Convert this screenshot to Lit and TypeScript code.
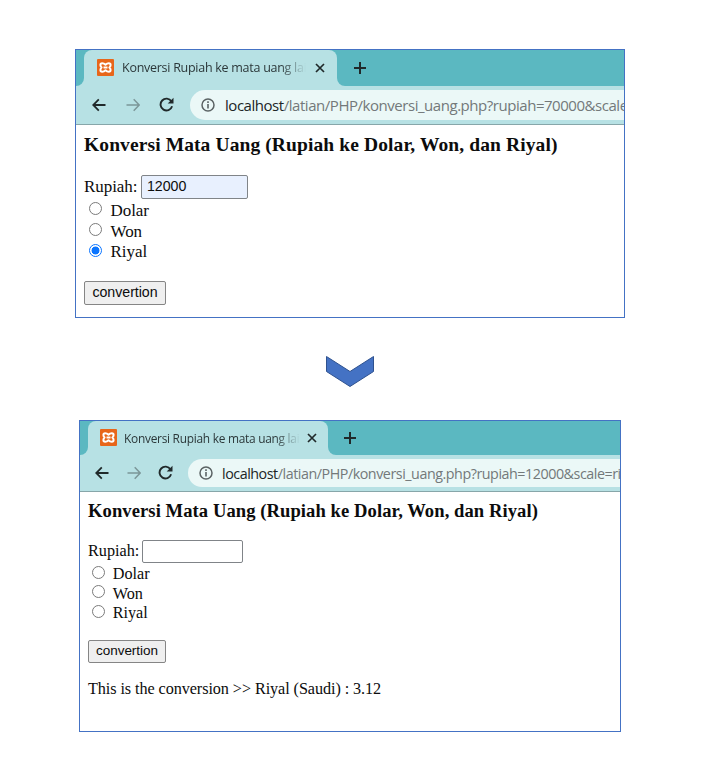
import { LitElement, html, css, nothing } from "lit";
import { customElement, property } from "lit/decorators.js";

@customElement("browser-window")
class BrowserWindow extends LitElement {
  @property() query = "";
  @property() amount = "";
  @property() selected = "";
  @property() result = "";

  static styles = css`
    :host { display: flex; flex-direction: column; box-sizing: border-box; border: 1px solid #4472c4; background: #fff; overflow: hidden; color: #0c0c0c; font-family: "Liberation Serif", serif; }
    .strip { flex: none; display: flex; height: var(--strip-h); background: #5bb8c1; }
    .flare { flex: none; width: 8px; background: #b7e1e4; }
    .flare::before { content: ""; display: block; height: 100%; background: #5bb8c1; border-radius: 0 0 8px 0; }
    .flare.right::before { border-radius: 0 0 0 8px; }
    .tab { flex: none; box-sizing: border-box; width: var(--tab-w); display: flex; align-items: center; background: #b7e1e4; border-radius: 8px 8px 0 0; padding-left: var(--tab-pad); padding-bottom: 1px; }
    .tab svg { flex: none; }
    .title { flex: none; width: var(--title-w); margin-left: var(--title-gap); white-space: nowrap; overflow: hidden; font: var(--title-font); letter-spacing: var(--title-ls); color: #2b3739; -webkit-mask-image: linear-gradient(to right, #000 86%, transparent 100%); mask-image: linear-gradient(to right, #000 86%, transparent 100%); }
    .close { margin-left: var(--close-gap); }
    .plus { flex: none; align-self: center; margin-left: var(--plus-gap); }
    .bar { flex: none; box-sizing: border-box; height: var(--bar-h); display: flex; align-items: center; background: #b7e1e4; border-bottom: 1px solid #87a6a9; padding-left: var(--bar-pad); }
    .bar svg { flex: none; display: block; }
    .nav { margin-bottom: 1px; }
    .fwd { margin-left: var(--nav-gap); }
    .reload { margin-left: calc(var(--nav-gap) - 1px); margin-right: 1px; }
    .pill { flex: 1; min-width: 0; height: var(--pill-h); margin-left: var(--pill-gap); display: flex; align-items: center; background: #ebf8f7; border-radius: 15px 0 0 15px; padding-left: 11px; overflow: hidden; }
    .url { margin-left: var(--url-gap); white-space: nowrap; font: var(--url-font); letter-spacing: var(--url-ls); color: #73797a; }
    .url b { font-weight: 400; color: #202526; }
    .page { flex: 1; padding-left: 8px; font-size: var(--text); letter-spacing: var(--text-ls); white-space: nowrap; }
    h3 { margin: 0; height: var(--h3-h); line-height: var(--h3-lh); font-size: var(--h3); letter-spacing: var(--h3-ls); }
    .field { display: flex; align-items: center; height: var(--field-h); }
    .label { width: var(--label-w); }
    .input { box-sizing: border-box; width: var(--input-w); height: 100%; border: 1px solid #808488; border-radius: 2px; padding-left: 5px; line-height: calc(var(--field-h) - 3px); font-family: "Liberation Sans", sans-serif; font-size: var(--control); letter-spacing: var(--control-ls); }
    .input.filled { background: #e8f0fe; }
    .options { padding-top: 2px; height: var(--opt-h); box-sizing: border-box; }
    .option { display: flex; height: var(--row); line-height: var(--row); padding-left: var(--option-pad); }
    .radio { box-sizing: border-box; width: 13px; height: 13px; margin-top: var(--radio-top); margin-right: var(--radio-gap); border: 1px solid #7b7b7b; border-radius: 50%; }
    .radio.on { border: 1.5px solid #0b75ff; background: radial-gradient(circle, #0b75ff 3.6px, #fff 4.3px); }
    .button { box-sizing: border-box; width: var(--button-w); height: var(--button-h); line-height: calc(var(--button-h) - 3px); border: 1px solid #858585; border-radius: 2px; background: #efefef; text-align: center; font-family: "Liberation Sans", sans-serif; font-size: var(--control); letter-spacing: var(--control-ls); }
    .result { margin-top: 16px; line-height: 20px; letter-spacing: -0.075px; }
  `;

  private option(name: string) {
    return html`<div class="option"><span class="radio ${name === this.selected ? "on" : ""}"></span><span>${name}</span></div>`;
  }

  render() {
    return html`
      <div class="strip">
        <div class="flare"></div>
        <div class="tab">
          <svg width="17" height="17" viewBox="0 0 17 17"><rect width="17" height="17" rx="1" fill="#e8661a"/><path d="M5.200 4.300Q7 4.300 8.500 5.800 10 4.300 11.800 4.300 13.600 4.300 13.600 6 13.600 7.500 12.400 8.500 13.600 9.500 13.600 11 13.600 12.700 11.800 12.700 10 12.700 8.500 11.200 7 12.700 5.200 12.700 3.400 12.700 3.400 11 3.400 9.500 4.600 8.500 3.400 7.500 3.400 6 3.400 4.300 5.200 4.300ZM6.500 8.500h4" fill="none" stroke="#fff" stroke-width="2" stroke-linejoin="round"/></svg>
          <span class="title">Konversi Rupiah ke mata uang lain</span>
          <svg class="close" width="10" height="10" viewBox="0 0 10 10"><path d="M1 1l8 8M9 1l-8 8" stroke="#20292a" stroke-width="1.700"/></svg>
        </div>
        <div class="flare right"></div>
        <svg class="plus" width="13" height="13" viewBox="0 0 13 13"><path d="M6 0v12M0 6h12" stroke="#20292a" stroke-width="2"/></svg>
      </div>
      <div class="bar">
        <svg class="nav" width="14" height="14" viewBox="0 0 14 14"><path d="M13.500 7H1.500M6.800 1.300L1.200 7 6.800 12.700" fill="none" stroke="#20292a" stroke-width="1.800"/></svg>
        <svg class="nav fwd" width="14" height="14" viewBox="0 0 14 14"><path d="M.500 7h12.500M7.700 1.300L13.200 7 7.700 12.700" fill="none" stroke="#7b9698" stroke-width="1.500"/></svg>
        <svg class="nav reload" width="15" height="15" viewBox="0 0 15 15"><path d="M12.400 4.300A5.900 5.900 0 1 0 13.100 9.300" fill="none" stroke="#20292a" stroke-width="1.900"/><path d="M14.500 .8V6.500H8.700Z" fill="#20292a"/></svg>
        <div class="pill">
          <svg width="14" height="14" viewBox="0 0 14 14"><circle cx="7" cy="7" r="6" fill="none" stroke="#5b6364" stroke-width="1.500"/><path d="M7 6v4.500M7 3.300v1.700" stroke="#5b6364" stroke-width="1.600"/></svg>
          <span class="url"><b>localhost</b>/latian/PHP/konversi_uang.php?${this.query}</span>
        </div>
      </div>
      <div class="page">
        <h3>Konversi Mata Uang (Rupiah ke Dolar, Won, dan Riyal)</h3>
        <div class="field"><span class="label">Rupiah:</span><span class="input ${this.amount ? "filled" : ""}">${this.amount}</span></div>
        <div class="options">${["Dolar", "Won", "Riyal"].map((n) => this.option(n))}</div>
        <div class="button">convertion</div>
        ${this.result ? html`<div class="result">${this.result}</div>` : nothing}
      </div>
    `;
  }
}

@customElement("app-root")
class AppRoot extends LitElement {
  static styles = css`
    :host { display: block; box-sizing: border-box; width: 701px; height: 772px; background: #fff; padding-top: 49px; overflow: hidden; }
    .before {
      width: 550px; height: 269px; margin-left: 75px;
      --strip-h: 36px; --tab-w: 253px; --tab-pad: 13px; --title-gap: 8px; --title-w: 184px;
      --title-font: 12.500px "Open Sans", sans-serif; --title-ls: -0.270px; --close-gap: 9px; --plus-gap: 9px;
      --bar-h: 39px; --bar-pad: 16px; --nav-gap: 20px; --pill-h: 30px; --pill-gap: 15px; --url-gap: 10px;
      --url-font: 15px "Open Sans", sans-serif; --url-ls: -0.460px;
      --text: 17px; --text-ls: -0.050px; --h3: 19.500px; --h3-ls: 0.105px; --h3-h: 50px; --h3-lh: 40px;
      --field-h: 24px; --label-w: 57px; --input-w: 107px; --control: 14.200px; --control-ls: -0.040px;
      --opt-h: 82px; --row: 20.600px; --option-pad: 5px; --radio-top: 1.400px; --radio-gap: 8.500px;
      --button-w: 82px; --button-h: 24px;
    }
    .arrow { display: block; margin: 37px 0 32px 325px; }
    .after {
      width: 542px; height: 312px; margin-left: 79px;
      --strip-h: 34px; --tab-w: 240px; --tab-pad: 12px; --title-gap: 7px; --title-w: 176px;
      --title-font: 11.900px "Open Sans", sans-serif; --title-ls: -0.260px; --close-gap: 7px; --plus-gap: 8px;
      --bar-h: 37px; --bar-pad: 15px; --nav-gap: 18px; --pill-h: 28px; --pill-gap: 14px; --url-gap: 9px;
      --url-font: 14.300px "Open Sans", sans-serif; --url-ls: -0.460px;
      --text: 16.200px; --text-ls: 0px; --h3: 18.600px; --h3-ls: 0.070px; --h3-h: 48px; --h3-lh: 38px;
      --field-h: 23px; --label-w: 54px; --input-w: 101px; --control: 13.500px; --control-ls: -0.040px;
      --opt-h: 77px; --row: 19.600px; --option-pad: 4px; --radio-top: .5px; --radio-gap: 7.700px;
      --button-w: 78px; --button-h: 23px;
    }
  `;

  render() {
    return html`
      <browser-window class="before" query="rupiah=70000&scale=riyal" amount="12000" selected="Riyal"></browser-window>
      <svg class="arrow" width="50" height="33" viewBox="0 0 50 33"><path d="M1.500 1.500L25 16.500 48.500 1.500V16.500L25 31.500 1.500 16.500Z" fill="#4472c4" stroke="#2f528f"/></svg>
      <browser-window class="after" query="rupiah=12000&scale=riyal" result="This is the conversion >> Riyal (Saudi) : 3.12"></browser-window>
    `;
  }
}
